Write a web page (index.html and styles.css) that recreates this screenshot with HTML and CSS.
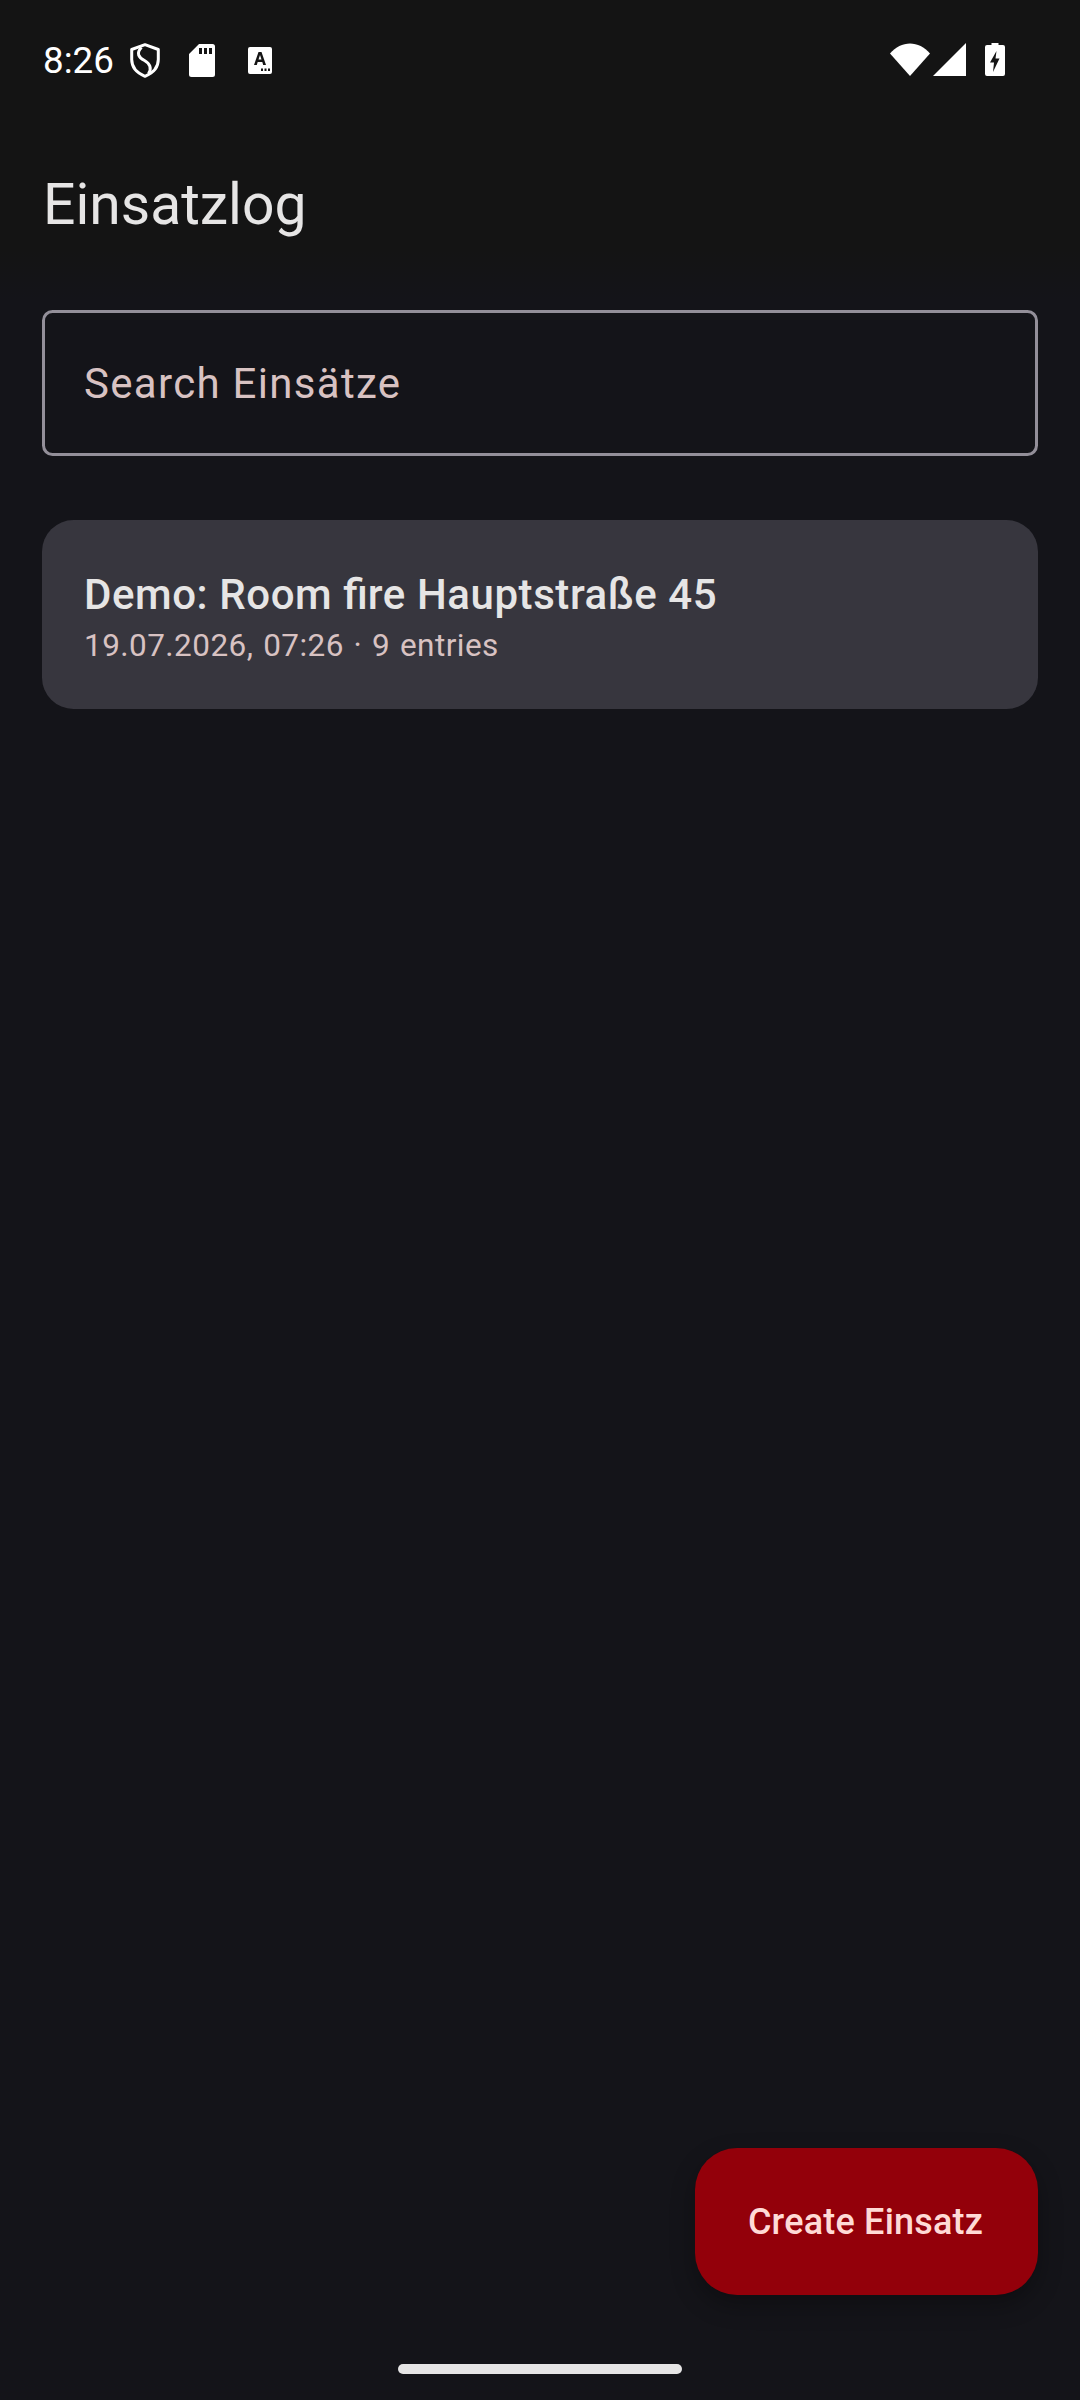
FILE: index.html
```html
<!DOCTYPE html>
<html lang="de">
<head>
<meta charset="utf-8">
<title>Einsatzlog</title>
<link rel="stylesheet" href="styles.css">
</head>
<body>
<div class="screen">
  <header class="topbar">
    <div class="status">
      <div class="status-left">
        <span class="clock">8:26</span>
        <svg class="icon shield" viewBox="0 0 30 35" width="30" height="35"><path d="M15 1.700 L28.300 6.500 V16.500 C28.300 24.500 23 30 15 33.300 C7 30 1.700 24.500 1.700 16.500 V6.500 Z" fill="none" stroke="#fff" stroke-width="3" stroke-linejoin="round"/><path d="M11.500 4.500 C6 10 8.500 14.500 14.500 17.500 C20 20.500 22 25.500 18.500 30.500" fill="none" stroke="#fff" stroke-width="3"/></svg>
        <svg class="icon sd" viewBox="0 0 26 33" width="26" height="33"><path fill-rule="evenodd" d="M10 0 H23.500 A2.500 2.500 0 0 1 26 2.500 V30.500 A2.500 2.500 0 0 1 23.500 33 H2.500 A2.500 2.500 0 0 1 0 30.500 V10 Z M10 4 V10 H13 V4 Z M15 4 V10 H18 V4 Z M20 4 V10 H23 V4 Z" fill="#fff"/></svg>
        <svg class="icon keyb" viewBox="0 0 24 27" width="24" height="27"><path fill-rule="evenodd" d="M2 0 H22 A2 2 0 0 1 24 2 V25 A2 2 0 0 1 22 27 H2 A2 2 0 0 1 0 25 V2 A2 2 0 0 1 2 0 Z M10.500 5 L6 18 H8.800 L9.700 15 H14.300 L15.200 18 H18 L13.500 5 Z M10.500 12.500 L12 8 L13.500 12.500 Z M13 21.500 V24 H15 V21.500 Z M16.500 21.500 V24 H18.500 V21.500 Z M20 21.500 V24 H22 V21.500 Z" fill="#fff"/></svg>
      </div>
      <div class="status-right">
        <svg class="icon wifi" viewBox="0 0 40 33" width="40" height="33"><path d="M0 10.500 C11 -3 29 -3 40 10.500 L20 33 Z" fill="#fff"/></svg>
        <svg class="icon signal" viewBox="0 0 33 33" width="33" height="33"><path d="M33 0 V33 H0 Z" fill="#fff"/></svg>
        <svg class="icon battery" viewBox="0 0 20 33" width="20" height="33"><path fill-rule="evenodd" d="M6.500 0 H13.500 V2 H18 A2 2 0 0 1 20 4 V31 A2 2 0 0 1 18 33 H2 A2 2 0 0 1 0 31 V4 A2 2 0 0 1 2 2 H6.500 Z M11.500 8 L5 19.500 H9 L8 29 L14.500 15.500 H10.500 Z" fill="#fff"/></svg>
      </div>
    </div>
    <h1 class="title">Einsatzlog</h1>
  </header>
  <main class="content">
    <div class="search"><span class="placeholder">Search Einsätze</span></div>
    <article class="card">
      <h2 class="card-title">Demo: Room <span class="lig">fi</span>re Hauptstraße 45</h2>
      <p class="card-meta">19.07.2026, 07:26 · 9 entries</p>
    </article>
  </main>
  <div class="actions"><button class="fab">Create Einsatz</button></div>
  <div class="nav"><span class="home"></span></div>
</div>
</body>
</html>
```
FILE: styles.css
```css
* { box-sizing: border-box; }
html, body { margin: 0; padding: 0; }
body { background: #141419; font-family: Roboto, "Noto Sans", sans-serif; }
.screen { width: 1080px; height: 2400px; display: flex; flex-direction: column; background: #141419; overflow: hidden; }
.topbar { height: 300px; background: linear-gradient(#141414 250px, #141419 300px); }
.status { height: 119px; padding: 0 75px 0 43px; display: flex; justify-content: space-between; align-items: center; }
.status-left, .status-right { display: flex; align-items: center; }
.status-left { padding-top: 2px; }
.clock { color: #fff; font-size: 36.75px; line-height: 42px; width: 87px; }
.icon { display: block; flex: none; }
.sd { margin-left: 29px; }
.keyb { margin-left: 33px; }
.signal { margin-left: 3px; }
.battery { margin-left: 19px; }
.title { margin: 0; padding: 50px 0 0 43px; color: #e6e5e5; font-size: 57px; line-height: 72px; font-weight: 400; }
.content { flex: 1; padding: 10px 42px 0; }
.search { height: 146px; border: 3px solid #938f99; border-radius: 10.5px; padding-left: 39px; display: flex; align-items: center; }
.placeholder { color: #d8c2c2; font-size: 42px; letter-spacing: 1.31px; }
.card { margin-top: 64px; height: 189px; background: #37363e; border-radius: 31.5px; padding: 47px 42px 0; display: flex; flex-direction: column; }
.card-title { margin: 0; color: #e6e5e5; font-size: 42px; line-height: 56px; font-weight: 500; letter-spacing: 0.57px; }
.lig { letter-spacing: 0; font-variant-ligatures: common-ligatures; }
.card-meta { margin: 2px 0 0; color: #d8c2c2; font-size: 31.5px; line-height: 42px; letter-spacing: 0.45px; word-spacing: 1.5px; }
.actions { display: flex; justify-content: flex-end; padding: 0 42px; }
.fab { width: 343px; height: 147px; border: 0; border-radius: 42px; background: #93000a; color: #ffdad6; font-family: inherit; font-size: 36px; font-weight: 500; letter-spacing: 0.2px; box-shadow: 0 10px 24px rgba(0,0,0,.3); padding: 0 2px 0 0; }
.nav { height: 105px; display: flex; justify-content: center; padding-top: 69px; }
.home { width: 284px; height: 10px; border-radius: 5px; background: #e6e5e5; display: block; }
```
